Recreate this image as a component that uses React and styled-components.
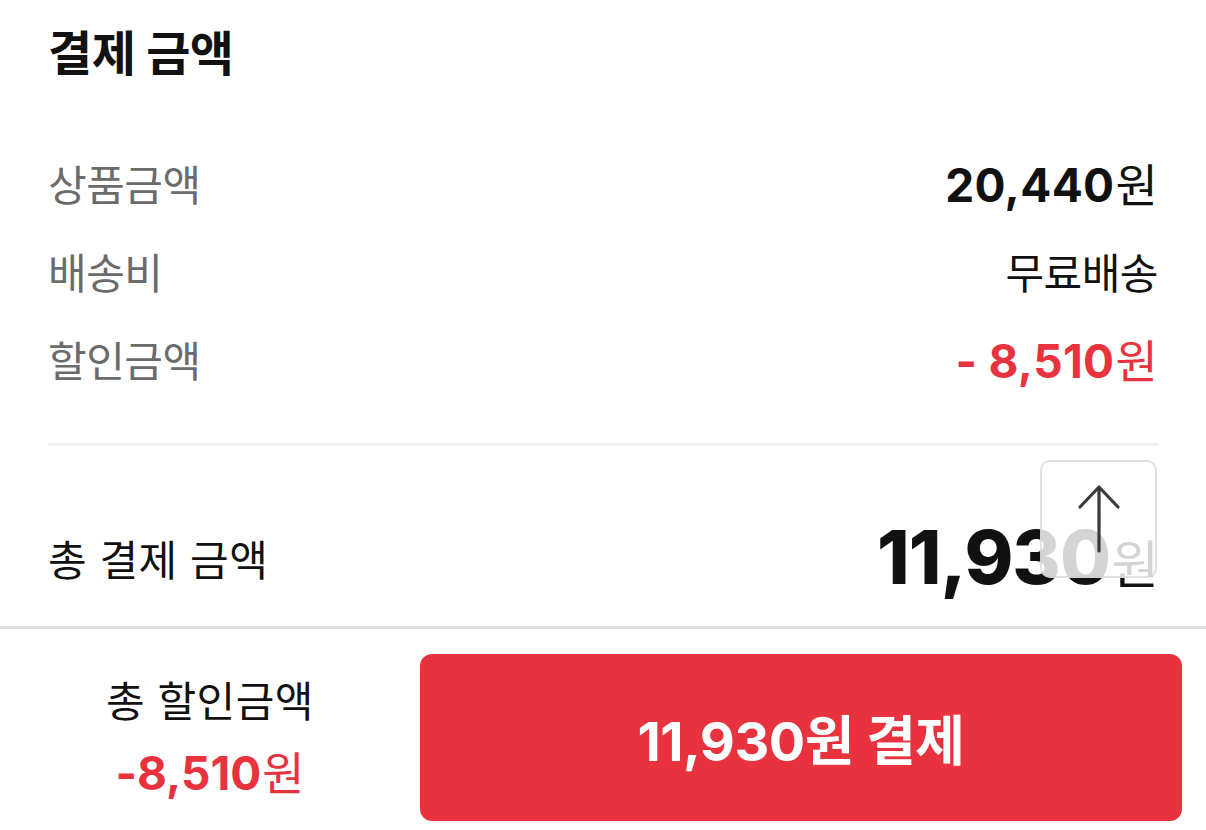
import React from 'react';
import styled, { createGlobalStyle } from 'styled-components';

const GlobalStyle = createGlobalStyle`
  body {
    margin: 0;
    background: #ffffff;
    font-family: Inter, 'Noto Sans CJK KR', sans-serif;
  }
`;

const RED = '#e8333f';

const Page = styled.div`
  position: relative;
  width: 1206px;
  height: 830px;
  display: flex;
  flex-direction: column;
  overflow: hidden;
`;

const Summary = styled.section`
  flex: 1;
  padding: 24px 48px 0 48px;
`;

const Title = styled.h2`
  margin: 0;
  font-size: 48px;
  line-height: 60px;
  font-weight: 700;
  color: #111;
  letter-spacing: -0.5px;
`;

const List = styled.div`
  margin-top: 54px;
  display: flex;
  flex-direction: column;
`;

const Row = styled.div`
  height: 88px;
  display: flex;
  align-items: center;
  justify-content: space-between;
`;

const Label = styled.span`
  font-size: 42px;
  color: #6b6b6b;
  letter-spacing: -0.5px;
`;

const Value = styled.span`
  font-size: ${(p) => (p.$plain ? '42px' : '46px')};
  font-weight: ${(p) => (p.$plain ? 400 : 700)};
  color: ${(p) => (p.$red ? RED : '#111')};
  letter-spacing: ${(p) => (p.$plain ? '-0.5px' : '0.3px')};
`;

const Won = styled.span`
  font-weight: 400;
  margin-left: 1px;
`;

const Divider = styled.hr`
  margin: 41px 0 0 0;
  border: none;
  height: 3px;
  background: #f1f1f1;
`;

const TotalRow = styled.div`
  margin-top: 63px;
  height: 96px;
  display: flex;
  align-items: center;
  justify-content: space-between;
`;

const TotalLabel = styled.span`
  font-size: 42px;
  color: #111;
  letter-spacing: 0.5px;
`;

const TotalValue = styled.span`
  font-size: 74px;
  font-weight: 800;
  color: #111;
  letter-spacing: -1px;
  ${Won} {
    font-size: 52px;
    font-weight: 400;
  }
`;

const ScrollTop = styled.button`
  position: absolute;
  top: 460px;
  right: 49px;
  width: 117px;
  height: 118px;
  border-radius: 10px;
  border: 2px solid rgba(205, 205, 205, 0.6);
  background: rgba(255, 255, 255, 0.82);
  display: flex;
  align-items: center;
  justify-content: center;
  padding: 0;
  cursor: pointer;
`;

const BottomBar = styled.footer`
  border-top: 3px solid #dedede;
  height: 204px;
  box-sizing: border-box;
  display: flex;
  align-items: stretch;
  padding: 25px 24px 9px 0;
`;

const DiscountBox = styled.div`
  width: 420px;
  display: flex;
  flex-direction: column;
  align-items: center;
  justify-content: center;
  gap: 8px;
  padding-bottom: 4px;
`;

const DiscountLabel = styled.span`
  font-size: 42px;
  color: #111;
  letter-spacing: 0.5px;
`;

const DiscountValue = styled.span`
  font-size: 46px;
  font-weight: 700;
  color: ${RED};
`;

const PayButton = styled.button`
  flex: 1;
  border: none;
  border-radius: 12px;
  background: ${RED};
  color: #fff;
  font-family: inherit;
  font-size: 54px;
  font-weight: 700;
  letter-spacing: -0.5px;
  cursor: pointer;
`;

const rows = [
  { label: '상품금액', value: '20,440', won: true },
  { label: '배송비', value: '무료배송', plain: true },
  { label: '할인금액', value: '- 8,510', won: true, red: true },
];

export default function App() {
  return (
    <Page>
      <GlobalStyle />
      <Summary>
        <Title>결제 금액</Title>
        <List>
          {rows.map((r) => (
            <Row key={r.label}>
              <Label>{r.label}</Label>
              <Value $plain={r.plain} $red={r.red}>
                {r.value}
                {r.won && <Won>원</Won>}
              </Value>
            </Row>
          ))}
        </List>
        <Divider />
        <TotalRow>
          <TotalLabel>총 결제 금액</TotalLabel>
          <TotalValue>
            11,930<Won>원</Won>
          </TotalValue>
        </TotalRow>
      </Summary>
      <ScrollTop aria-label="맨 위로">
        <svg width="44" height="70" viewBox="0 0 44 70" fill="none">
          <path d="M22 3 V67 M3 23 L22 3 L41 23" stroke="#3a3a3a" strokeWidth="3.2" strokeLinecap="round" strokeLinejoin="round" />
        </svg>
      </ScrollTop>
      <BottomBar>
        <DiscountBox>
          <DiscountLabel>총 할인금액</DiscountLabel>
          <DiscountValue>
            -8,510<Won>원</Won>
          </DiscountValue>
        </DiscountBox>
        <PayButton>11,930원 결제</PayButton>
      </BottomBar>
    </Page>
  );
}
